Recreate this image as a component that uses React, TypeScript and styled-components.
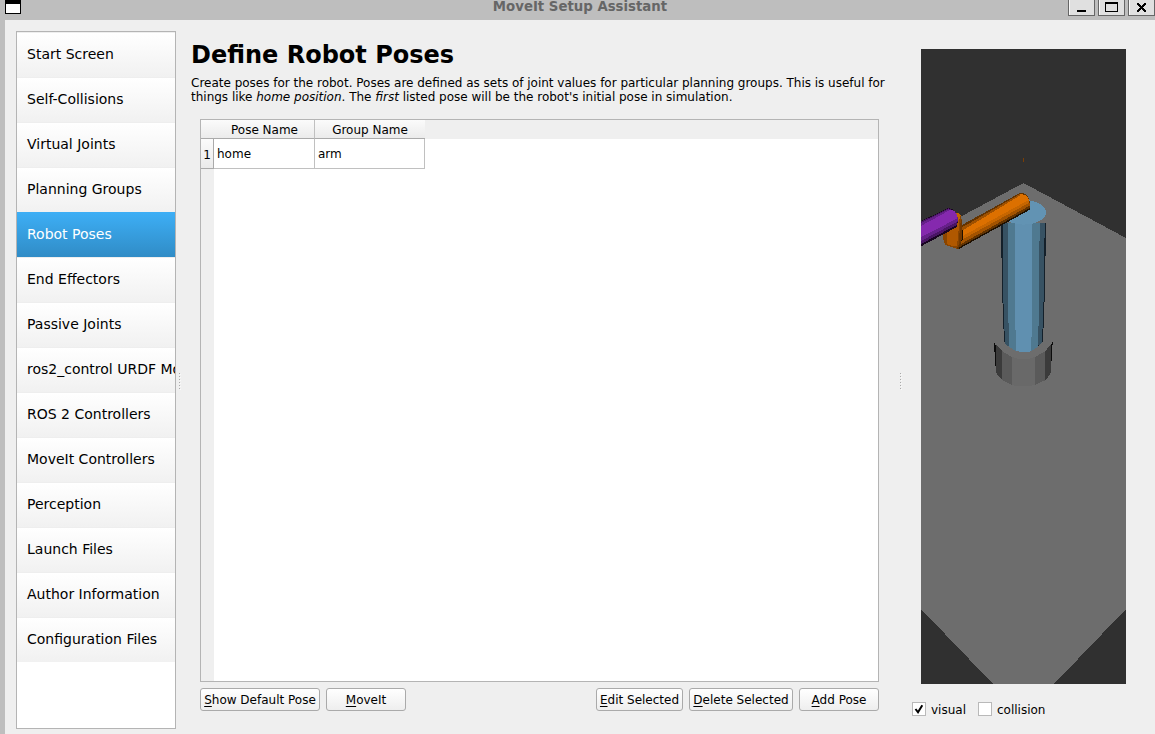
import React from "react";
import styled, { createGlobalStyle } from "styled-components";

const Global = createGlobalStyle`
  * { box-sizing: border-box; }
  body {
    margin: 0;
    overflow: hidden;
    background: #bebebe;
    color: #000;
    font: 12px/14px "DejaVu Sans", Verdana, sans-serif;
  }
`;

const Window = styled.div`
  display: flex;
  flex-direction: column;
  width: 1155px;
  height: 734px;
  overflow: hidden;
  background: #bebebe;
`;

const TitleBar = styled.header`
  display: flex;
  justify-content: space-between;
  flex: none;
  height: 20px;
  padding-left: 5px;
`;

const WindowIcon = styled.span`
  width: 16px;
  height: 14px;
  background: #fff;
  border: 1px solid #000;
  border-top-width: 4px;
`;

const WindowTitle = styled.span`
  font-size: 13.3px;
  font-weight: bold;
  line-height: 13px;
  color: #666;
  margin-left: 71px;
`;

const WindowControls = styled.div`
  display: flex;
  gap: 3px;
`;

const ControlButton = styled.button`
  width: 27px;
  height: 16px;
  padding: 0;
  background: #e0e0e0;
  border: 1px solid #666;
  border-top: 0;
  box-shadow: inset 1px 0 #f8f8f8;
  svg { display: block; }
`;

const Body = styled.div`
  display: flex;
  flex: 1;
  margin-left: 5px;
  background: #efefef;
`;

const Sidebar = styled.nav`
  width: 160px;
  height: 698px;
  margin: 11px 0 0 11px;
  flex: none;
  overflow: hidden;
  background: #fff;
  border: 1px solid #b4b4b4;
`;

const NavItem = styled.div<{ $active?: boolean }>`
  height: 45px;
  padding-left: 10px;
  font-size: 14px;
  line-height: 42px;
  white-space: nowrap;
  color: ${(p) => (p.$active ? "#fff" : "#000")};
  border-top: 1px solid ${(p) => (p.$active ? "#3daef5" : "#eeeeee")};
  background: ${(p) =>
    p.$active
      ? "linear-gradient(#3daef5, #308cc6)"
      : "linear-gradient(#fff, #f1f1f1)"};
`;

const Splitter = styled.div<{ $before: number; $after: number }>`
  display: flex;
  flex-direction: column;
  gap: 2px;
  flex: none;
  margin: 353px ${(p) => p.$after}px 0 ${(p) => p.$before}px;
`;

const Dot = styled.i`
  width: 1px;
  height: 1px;
  background: #aaa;
  box-shadow: 1px 1px #fafafa;
`;

const Main = styled.main`
  width: 709px;
  flex: none;
  padding-top: 20px;
`;

const Heading = styled.h1`
  margin: 0;
  font-size: 24px;
  line-height: 30px;
  font-weight: bold;
`;

const Description = styled.p`
  margin: 6px 0 15px;
  white-space: nowrap;
  word-spacing: -0.045px;
`;

const TablePanel = styled.section`
  display: flex;
  flex-direction: column;
  width: 679px;
  height: 563px;
  margin-left: 9px;
  background: #fff;
  border: 1px solid #b4b4b4;
`;

const HeaderRow = styled.div`
  display: flex;
  height: 19px;
  flex: none;
  background: #efefef;
`;

const HeaderCell = styled.div<{ $width: number; $inset?: number; $last?: boolean }>`
  width: ${(p) => p.$width}px;
  padding-left: ${(p) => p.$inset ?? 0}px;
  text-align: center;
  line-height: 20px;
  background: linear-gradient(#fbfbfb, #ebebeb);
  border-bottom: 1px solid #aaa;
  border-right: ${(p) => (p.$last ? "0" : "1px solid #c0c0c0")};
`;

const TableBody = styled.div`
  display: flex;
  flex: 1;
`;

const RowHeaders = styled.div`
  width: 13px;
  background: #efefef;
`;

const RowNumber = styled.div`
  height: 30px;
  line-height: 32px;
  text-align: center;
  background: linear-gradient(#fbfbfb, #ebebeb);
  border-right: 1px solid #aaa;
  border-bottom: 1px solid #aaa;
`;

const Cell = styled.div<{ $width: number }>`
  width: ${(p) => p.$width}px;
  height: 30px;
  padding-left: 3px;
  line-height: 30px;
  border-right: 1px solid #c0c0c0;
  border-bottom: 1px solid #c0c0c0;
`;

const ButtonRow = styled.div`
  display: flex;
  gap: 6px;
  width: 679px;
  margin: 6px 0 0 9px;
`;

const Spacer = styled.div`
  flex: 1;
`;

const PushButton = styled.button<{ $width: number }>`
  width: ${(p) => p.$width}px;
  height: 23px;
  padding: 1px 0 0;
  font: inherit;
  line-height: 20px;
  color: #000;
  white-space: nowrap;
  background: linear-gradient(#fff, #eeeeee);
  border: 1px solid #aaa;
  border-radius: 3px;
`;

const Mnemonic = styled.span`
  text-decoration: underline;
  text-decoration-thickness: 1px;
  text-underline-offset: 2px;
  text-decoration-skip-ink: none;
`;

const Preview = styled.aside`
  width: 214px;
  flex: none;
  padding-top: 29px;
`;

const Viewport = styled.svg`
  display: block;
  width: 205px;
  height: 635px;
  margin-left: 9px;
  background: #303030;
`;

const CheckRow = styled.div`
  display: flex;
  gap: 12px;
  margin-top: 18px;
`;

const CheckLabel = styled.label`
  display: flex;
  gap: 5px;
  line-height: 16px;
`;

const CheckBox = styled.span`
  width: 14px;
  height: 14px;
  background: #fff;
  border: 1px solid #b9b9b9;
  svg { display: block; }
`;

const pages = [
  "Start Screen",
  "Self-Collisions",
  "Virtual Joints",
  "Planning Groups",
  "Robot Poses",
  "End Effectors",
  "Passive Joints",
  "ros2_control URDF Model",
  "ROS 2 Controllers",
  "MoveIt Controllers",
  "Perception",
  "Launch Files",
  "Author Information",
  "Configuration Files",
];

function Handle({ before, after }: { before: number; after: number }) {
  return (
    <Splitter $before={before} $after={after}>
      {[0, 1, 2, 3, 4, 5].map((n) => (
        <Dot key={n} />
      ))}
    </Splitter>
  );
}

function ActionButton({ label, width }: { label: string; width: number }) {
  return (
    <PushButton $width={width}>
      <Mnemonic>{label[0]}</Mnemonic>
      {label.slice(1)}
    </PushButton>
  );
}

function RobotScene() {
  return (
    <Viewport viewBox="0 0 205 635" shapeRendering="crispEdges">
      {/* ground */}
      <path fill="#6d6d6d" d="M102.5 134 205 189V560L133 635H72L0 560V189Z" />
      <path fill="#7a3e05" d="M102 109h1v4h-1z" />

      {/* column */}
      <g transform="translate(49 201) scale(.33333)">
        <path fill="#14202a" d="M93-80H228L225 120 219 275 190 300H130L102 275 96 120Z" />
        <path fill="#375263" d="M98-80H224L222 120 216 278 185 303H138L105 282 99 120Z" />
        <path fill="#4f7990" d="M113-80H209L207 170 204 290 183 304H138L118 291 114 170Z" />
        <path fill="#6090b0" d="M135-80H187L186 222 183 304 160 307 138 303 135 168Z" />
      </g>
      <ellipse cx="102.7" cy="163.3" rx="22.4" ry="12.3" fill="#6293b3" />

      {/* base */}
      <g transform="translate(49 201) scale(.33333)">
        <path fill="#0c0c0c" d="M72 276 78 286V367L75 330Z M248 276 241 286V370L245 330Z" />
        <path fill="#3b3b3b" d="M77 283 97 304V391L86 379 78 367Z M243 283 225 304V391L236 379 242 367Z" />
        <path fill="#5a5a5a" d="M97 304 126 321V405L97 391Z M225 304 195 321V405L225 391Z" />
        <path fill="#696969" d="M126 321 145 327H175L195 321V405L175 409H145L126 405Z" />
      </g>

      {/* arm links */}
      <g transform="translate(-6 91) scale(.33333)">
        <path fill="#633300" d="M141 255 316 158 330 161 340 172 346 189 344 207 128 328 118 320Z" />
        <path fill="#a35300" d="M141 262 318 163 343 180 344 194 137 310Z" />
        <path fill="#c76600" d="M142 267 319 165 342 181 343 194 141 306Z" />
        <path fill="#dc7000" d="M142 272 318 162 333 166 343 179 141 289Z" />
        <path fill="#9e5000" d="M142 262 313 163 319 164 142 272Z" />
        <path fill="#a35300" d="M141 299 345 187 344 200 138 315Z" />
        <path fill="#633300" d="M138 312 344 197V204L128 325Z" />
        <path fill="#1f1000" d="M134 321 345 204V209L128 329Z" />

        <path fill="#1f1000" d="M84 270H143V299L138 304H86Z" />
        <path fill="#8a4500" d="M86 270 115 219 130 218 138 227 140 240V292L137 306 125 326 107 320 90 314 85 297Z" />
        <path fill="#b05800" d="M96 270 131 240 132 260 126 318 111 318 96 312Z" />
        <path fill="#733900" d="M136 249 140 240V298L130 321Z" />
        <path fill="#c46400" d="M114 218 130 218 137 227 132 241 120 232Z" />

        <path fill="#180520" d="M18 243 100 204 112 207 129 238 126 261 18 319Z" />
        <path fill="#491564" d="M18 245 100 205 122 216 129 241 125 255 18 312Z" />
        <path fill="#66208a" d="M18 249 101 208 120 215 129 235 127 245 18 303Z" />
        <path fill="#8529ae" d="M18 258 107 209 117 212 126 224 128 235 18 291Z" />
      </g>
    </Viewport>
  );
}

export default function App() {
  return (
    <Window>
      <Global />
      <TitleBar>
        <WindowIcon />
        <WindowTitle>MoveIt Setup Assistant</WindowTitle>
        <WindowControls>
          <ControlButton aria-label="Minimize">
            <svg width="25" height="15"><path d="M8 10h9v2H8z" /></svg>
          </ControlButton>
          <ControlButton aria-label="Maximize">
            <svg width="25" height="15" shapeRendering="crispEdges">
              <path fillRule="evenodd" d="M6 2h13v10H6zM7 4v7h11V4z" />
            </svg>
          </ControlButton>
          <ControlButton aria-label="Close">
            <svg width="25" height="15" shapeRendering="crispEdges">
              <path d="M8 3h2v1h1v1h1v1h1V5h1V4h1V3h2v2h-1v1h-1v1h-1v1h1v1h1v1h1v2h-2v-1h-1v-1h-1V9h-1v1h-1v1h-1v1H8v-2h1V9h1V8h1V7h-1V6H9V5H8z" />
            </svg>
          </ControlButton>
        </WindowControls>
      </TitleBar>
      <Body>
        <Sidebar>
          {pages.map((page) => (
            <NavItem key={page} $active={page === "Robot Poses"}>{page}</NavItem>
          ))}
        </Sidebar>
        <Handle before={3} after={11} />
        <Main>
          <Heading>Define Robot Poses</Heading>
          <Description>
            Create poses for the robot. Poses are defined as sets of joint values for particular planning groups. This is useful for
            <br />
            things like <em>home position</em>. The <em>first</em> listed pose will be the robot's initial pose in simulation.
          </Description>
          <TablePanel>
            <HeaderRow>
              <HeaderCell $width={114} $inset={14}>Pose Name</HeaderCell>
              <HeaderCell $width={110} $last>Group Name</HeaderCell>
            </HeaderRow>
            <TableBody>
              <RowHeaders><RowNumber>1</RowNumber></RowHeaders>
              <Cell $width={101}>home</Cell>
              <Cell $width={110}>arm</Cell>
            </TableBody>
          </TablePanel>
          <ButtonRow>
            <ActionButton label="Show Default Pose" width={120} />
            <ActionButton label="MoveIt" width={80} />
            <Spacer />
            <ActionButton label="Edit Selected" width={87} />
            <ActionButton label="Delete Selected" width={104} />
            <ActionButton label="Add Pose" width={80} />
          </ButtonRow>
        </Main>
        <Handle before={0} after={11} />
        <Preview>
          <RobotScene />
          <CheckRow>
            <CheckLabel>
              <CheckBox>
                <svg width="12" height="12" viewBox="0 0 12 12">
                  <path d="M2.5 6 5 9.3 9.3 2.2" fill="none" stroke="#000" strokeWidth="2" />
                </svg>
              </CheckBox>
              visual
            </CheckLabel>
            <CheckLabel>
              <CheckBox />
              collision
            </CheckLabel>
          </CheckRow>
        </Preview>
      </Body>
    </Window>
  );
}
